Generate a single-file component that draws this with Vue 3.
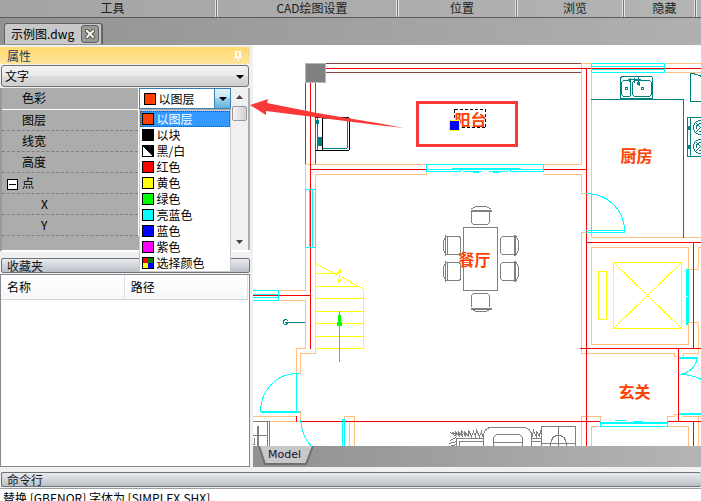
<script setup>
import { ref } from 'vue'

const menus = ['工具', 'CAD绘图设置', '位置', '浏览', '隐藏', '']
const colours = [
  { name: '以图层', swatch: 'layer' },
  { name: '以块', swatch: 'block' },
  { name: '黑/白', swatch: 'mono' },
  { name: '红色', swatch: 'red' },
  { name: '黄色', swatch: 'yellow' },
  { name: '绿色', swatch: 'green' },
  { name: '亮蓝色', swatch: 'cyan' },
  { name: '蓝色', swatch: 'blue' },
  { name: '紫色', swatch: 'magenta' },
  { name: '选择颜色', swatch: 'pick' }
]
const kind = ref('文字')
const colour = ref('以图层')
const stairs = [286, 298, 311, 323, 336, 348]
</script>

<template>
  <div class="app">
    <nav class="ribbon">
      <div v-for="(m, i) in menus" :key="i" class="group">{{ m }}</div>
    </nav>

    <div class="tabs">
      <div class="tab">
        <span>示例图.dwg</span>
        <button class="close" aria-label="关闭">
          <svg width="10" height="10" viewBox="0 0 10 10"><path d="M2 2L8 8M8 2L2 8" stroke="#555040" stroke-width="4" stroke-linecap="square" /><path d="M2 2L8 8M8 2L2 8" stroke="#fffdf0" stroke-width="2" stroke-linecap="square" /></svg>
        </button>
      </div>
    </div>

    <main class="main">
      <aside class="side">
        <header class="title">
          <span>属性</span>
          <svg width="8" height="10" viewBox="0 0 8 10" shape-rendering="crispEdges"><path d="M1 0H7V6H8V7H5V10H4V7H0V6H1ZM3 1V6H5V1Z" fill="#fff" fill-rule="evenodd" /></svg>
        </header>

        <div class="kind">
          <select v-model="kind" aria-label="对象类型"><option>文字</option></select>
          <svg class="caret" width="8" height="4" viewBox="0 0 8 4"><path d="M0 0H8L4 4Z" /></svg>
        </div>

        <div class="props">
          <table class="grid">
            <tbody>
              <tr class="active">
                <th scope="row"><label for="colour">色彩</label></th>
                <td>
                  <div class="combo">
                    <i class="swatch layer"></i>
                    <select id="colour" v-model="colour">
                      <option v-for="c in colours" :key="c.name">{{ c.name }}</option>
                    </select>
                    <span class="drop"><svg width="8" height="4" viewBox="0 0 8 4"><path d="M0 0H8L4 4Z" /></svg></span>
                    <ul class="list" role="listbox" aria-label="色彩">
                      <li v-for="c in colours" :key="c.name" role="option" :aria-selected="c.name === colour" :class="{ on: c.name === colour }" @click="colour = c.name">
                        <i class="swatch" :class="c.swatch"></i>{{ c.name }}
                      </li>
                    </ul>
                  </div>
                </td>
              </tr>
              <tr><th scope="row">图层</th><td></td></tr>
              <tr><th scope="row">线宽</th><td></td></tr>
              <tr><th scope="row">高度</th><td></td></tr>
              <tr><th scope="row" class="branch"><button class="fold" aria-label="折叠"></button>点</th><td></td></tr>
              <tr><th scope="row" class="leaf">X</th><td></td></tr>
              <tr><th scope="row" class="leaf">Y</th><td></td></tr>
            </tbody>
          </table>
          <div class="scroll">
            <svg width="7" height="4" viewBox="0 0 7 4"><path d="M0 4H7L3.500 0Z" fill="#444" /></svg>
            <span class="thumb"></span>
            <svg class="down" width="7" height="4" viewBox="0 0 7 4"><path d="M0 0H7L3.500 4Z" fill="#444" /></svg>
          </div>
        </div>

        <header class="bar fav">收藏夹</header>
        <div class="files">
          <table>
            <thead><tr><th scope="col">名称</th><th scope="col">路径</th></tr></thead>
          </table>
        </div>
      </aside>

      <section class="view">
        <div class="canvas">
          <svg class="plan" viewBox="253 45 448 401" preserveAspectRatio="xMinYMin slice">
            <g transform="translate(.5 .5)" fill="none" stroke-linecap="square" shape-rendering="crispEdges">
              <g stroke="#804840">
                <path d="M326 63H581M326 72H581M305 83V164M315 83V164" />
              </g>
              <g stroke="#ffc080">
                <path d="M305 189V164H426V174H315V189M543 164H581V63H591M543 174H581V193H591M591 72V193M665 63H701M665 72H701" />
                <path d="M305 247V290H278M278 300H305V348H296V373M315 247V263M315 348V353H300V373M300 421V411H298M253 416H296M270 421H301M344 419V416H354V446M349 421V446" />
                <path d="M586 232H581V353H674V356H678M591 232V237H701M688 269V247H591V344H688V322H698V353H683V356M688 269H698V247H701" />
                <path d="M581 446V416H600V421M600 426H591V446M667 421V416H674V414H683V416H701M667 426H688V446M698 416V446" />
              </g>
              <g stroke="#ff0000">
                <path d="M326 68H701M310 83V348M310 169H426M543 169H586M586 68V446M278 295H310M253 295H278" />
                <path d="M586 242H701M693 242V348M580 348H701M678 348V421M301 421H600M667 421H701M693 421V446M296 416V421" />
              </g>
              <g stroke="#00ffff">
                <path d="M591 63H664V72H591ZM591 66H664M591 69H664M591 193V232" />
                <path d="M426 171V164H543V171M426 169H460M426 171H460V169M510 169H543M543 171H510V169M463 171H480M489 171H507M473 172H478M493 172H498" />
                <path d="M452 168H518" stroke-width="2" />
                <path d="M305 189H315V247H305ZM309 189V247M312 189V247M253 290H278V300H253M253 294H278M253 297H278" />
                <path d="M586 193A38 37 0 0 1 624 230M586 230H624V232H586" />
                <path d="M688 269V322" />
                <path d="M686 269V294M686 297V323" stroke-width="2" />
                <path d="M260 411A36 38 0 0 1 296 373H299M296 373V411M300 420Q302 437 311 446M342 446V419H344V446" />
                <path d="M261 411H298M679 357H696M679 413H701M601 422H666" stroke-width="2" />
                <path d="M600 421V426H667V421M615 420H625M633 421H642M647 423H655M696 357V361Q691 373 679 374Q692 374 701 379" />
              </g>
              <g stroke="#008080">
                <path d="M591 99H683V237" />
                <path d="M622 76H651L652 77V98H620V77ZM623 80H629L630 82V95L629 96H623L621 94V82ZM634 80H649L651 82V94L649 96H634L632 94V82ZM628 79H640M630 78V81M634 78V82M638 77V84L639 85" />
                <circle cx="626" cy="88" r="1" /><circle cx="642" cy="88" r="1" /><circle cx="638" cy="83" r="1" />
                <path d="M701 101H690V73Q696 73 701 76M701 117H687V156H701M690 117V156M688 126V129M688 145V148M689 126V129M689 145V148" />
                <circle cx="700" cy="127" r="7" /><circle cx="700" cy="127" r="4" /><circle cx="700" cy="146" r="7" /><circle cx="700" cy="146" r="4" />
                <path d="M695 122L701 128M695 132L701 126M695 141L701 147M695 151L701 145" />
                <path d="M347 118V147L346 148H322V118H347M315 118V150M317 118V150" />
                <path d="M318 137H321V145H318ZM316 120H318V123H316Z" fill="#008080" />
                <path d="M287 320L286 319H284L283 321V323L284 324H286L287 322H304M285 322H287" />
              </g>
              <path d="M315 117H348L349 118V149L348 150H315M322 117V150" stroke="#000" />
              <g stroke="#ffff00">
                <path d="M315 263L336 274L340 269L338 282L342 277L363 289V348M315 263V348M315 273H338" />
                <path v-for="y in stairs" :key="y" :d="`M315 ${y}H${y === 286 ? 358 : 363}`" />
                <path d="M598 271H606V319H598ZM613 262H681V328H613ZM613 262L681 328M681 262L613 328" />
              </g>
              <g stroke="#00ff00" fill="#00ff00">
                <path d="M339 311V361M338 315H340V322H341V325H337V322H338Z" />
              </g>
              <g stroke="#808080">
                <rect x="463" y="227" width="34" height="63" rx="1" />
                <path d="M471 211V222L473 224H487L489 222V211M471 208L476 206H485L490 208" />
                <path d="M471 306V295L473 293H487L489 295V306M471 309L476 311H485L490 309" />
                <path d="M471 210H490M471 308H490" stroke-width="2" />
                <path v-for="y in [236, 262]" :key="y" :d="`M446 ${y}H459L460 ${y + 2}V${y + 16}L459 ${y + 18}H446M447 ${y}V${y + 18}M445 ${y - 1}V${y + 19}M445 ${y}L443 ${y + 5}V${y + 13}L445 ${y + 18}`" />
                <path v-for="y in [236, 262]" :key="'r' + y" :d="`M515 ${y}H502L500 ${y + 2}V${y + 16}L502 ${y + 18}H515M514 ${y - 1}V${y + 19}M515 ${y - 1}V${y + 19}M516 ${y}L518 ${y + 5}V${y + 13}L516 ${y + 18}`" />
                <path d="M253 421H269V446M267 421V446M253 435H267M253 444H254V438M257 426V446M258 426V446" />
                <path d="M456 446V438H483M459 446V441H483M449 446L456 444M449 443L456 441M450 440L455 437M450 432L456 436M452 432L456 434L455 431L459 436L458 431L462 436L461 430L465 436L464 431L468 436L468 430L471 436L473 431L475 436L476 430L479 436L481 431L482 436" />
                <path d="M483 446V435Q484 427 491 427H523Q531 428 531 435V446M493 446V437L496 434H519L522 437V446M493 442H522" />
                <path d="M531 438H541M531 441H541M532 436L533 430L536 437L536 431L539 436L540 430L541 437" />
                <path d="M541 446V426H575V446M541 443H575M558 426V446M550 446Q550 435 558 435Q566 435 566 446" />
              </g>
              <rect x="305" y="63" width="20" height="19" fill="#808080" stroke="#b8b8b8" />
              <g class="rooms">
                <text x="454" y="125">阳台</text>
                <text x="620" y="161">厨房</text>
                <text x="458" y="265">餐厅</text>
                <text x="618" y="397">玄关</text>
              </g>
              <rect x="454" y="109" width="31" height="18" stroke="#000" stroke-dasharray="3 2" stroke-linecap="butt" />
              <rect x="449" y="120" width="10" height="10" fill="#0000ff" stroke="#ffff00" />
              <rect x="417" y="102" width="99" height="43" stroke="#fb3838" stroke-width="3" />
            </g>
            <path d="M250 105L268 99L267 103L317 113L383 124L404 128L377 125L266 111V115Z" fill="#fb3838" />
          </svg>
        </div>
        <div class="sheets">
          <button class="sheet">
            <svg width="56" height="19" viewBox="0 0 56 19"><path d="M1 0L7 18H48L55 0" fill="#c8c8c8" stroke="#707070" stroke-width="2" /></svg>
            <span>Model</span>
          </button>
        </div>
      </section>
    </main>

    <footer class="command">
      <header class="bar">命令行</header>
      <p class="log">替换 [GBENOR] 字体为 [SIMPLEX.SHX]</p>
    </footer>
  </div>
</template>

<style>
body { overflow: hidden; }
</style>

<style scoped>
* { box-sizing: border-box; }
.app {
  display: flex;
  flex-direction: column;
  height: 100vh;
  overflow: hidden;
  background: #f0f0f0;
  color: #000;
  font: 12px/16px "Noto Sans CJK SC", "Noto Sans", sans-serif;
}
.ribbon {
  display: grid;
  grid-template-columns: 218fr 181fr 119fr 107fr 72fr 4fr;
  flex: none;
  height: 18px;
  background: linear-gradient(90deg, #a4a4a4, #b4b4b4);
  border-bottom: 1px solid #5c5c5c;
}
.group {
  min-width: 0;
  padding-left: 8px;
  text-align: center;
  color: #1c1c1c;
  border-right: 1px solid #e8e8e8;
  box-shadow: inset -1px 0 #787878, inset -2px 0 #e0e0e0;
}
.group:last-child { padding: 0; border: 0; box-shadow: none; }
.tabs {
  display: flex;
  align-items: flex-end;
  flex: none;
  height: 27px;
  padding: 0 4px 1px;
  background: linear-gradient(90deg, #929292, #b0b0b0);
}
.tab {
  display: flex;
  align-items: center;
  gap: 7px;
  height: 21px;
  padding: 0 2px 0 6px;
  background: #c8c8c8;
  border: 1px solid #646464;
  border-width: 1px 2px 0 1px;
  border-radius: 3px 3px 0 0;
}
.close {
  display: grid;
  place-items: center;
  width: 18px;
  height: 18px;
  padding: 0;
  background: #989898;
  border: 1px solid #606060;
  border-radius: 3px;
}
.main { display: flex; flex: none; height: calc(100vh - 79px); }
.side {
  display: flex;
  flex-direction: column;
  flex: none;
  width: 250px;
}
.title {
  display: flex;
  align-items: center;
  justify-content: space-between;
  height: 17px;
  margin-top: 2px;
  margin-bottom: 1px;
  padding: 0 8px 0 7px;
  line-height: 14px;
  background: linear-gradient(#ffd870, #ffe49c);
  color: #1e395b;
}
.kind { display: flex; position: relative; height: 22px; padding: 0 1px; }
.kind select {
  flex: 1;
  padding: 0 3px;
  appearance: none;
  border: 1px solid #707070;
  border-radius: 3px;
  background: linear-gradient(#f2f2f2, #ebebeb 50%, #dddddd 50%, #cfcfcf);
  color: #000;
  font: inherit;
}
.caret { position: absolute; right: 6px; top: 10px; }
.props {
  display: flex;
  height: 164px;
  margin-top: 1px;
  background: #acacac;
  border-left: 2px solid #989898;
  border-bottom: 2px solid #fff;
}
.grid {
  flex: 1;
  align-self: flex-start;
  border-collapse: collapse;
  table-layout: fixed;
}
.grid tr { height: 21px; }
.grid th {
  width: 136px;
  padding: 0 0 0 20px;
  font-weight: 400;
  text-align: left;
  border-bottom: 1px dashed #808080;
}
.grid .active th { border-bottom: 1px solid #fff; }
.grid td { padding: 0; border-left: 1px solid #fff; }
.grid .branch { padding-left: 5px; }
.grid .leaf { padding-left: 39px; }
.fold {
  width: 11px;
  height: 11px;
  margin: 0 4px 0 0;
  padding: 0;
  vertical-align: -1px;
  border: 1px solid #000;
  background: linear-gradient(#000, #000) center / 7px 1px no-repeat #fff;
}
.combo {
  display: flex;
  position: relative;
  align-items: center;
  height: 21px;
  padding-left: 4px;
  background: #fff;
  border: 1px solid #3c7fb1;
}
.combo select {
  flex: 1;
  min-width: 0;
  padding: 0 0 0 3px;
  appearance: none;
  border: 0;
  background: none;
  color: #000;
  font: inherit;
}
.drop {
  display: grid;
  place-items: center;
  align-self: stretch;
  width: 16px;
  border-left: 1px solid #3c7fb1;
  background: linear-gradient(#e0f2fb, #c4e5f6 50%, #98d1ef 50%, #68b3db);
}
.swatch { flex: none; width: 12px; height: 12px; border: 1px solid #000; }
.layer { background: #ff4000; }
.block { background: #000; }
.mono { background: linear-gradient(45deg, #fff 50%, #000 50%); }
.red { background: #ff0000; }
.yellow { background: #ffff00; }
.green { background: #00ff00; }
.cyan { background: #00ffff; }
.blue { background: #0000ff; }
.magenta { background: #ff00ff; }
.pick { background: conic-gradient(#008000 25%, #0000ff 25% 50%, #ffff00 50% 75%, #ff0000 75%); }
.list {
  position: absolute;
  z-index: 2;
  top: 21px;
  left: -1px;
  right: -1px;
  margin: 0;
  padding: 0;
  list-style: none;
  background: #fff;
  border: 1px solid #c8c8d0;
}
.list li { display: flex; align-items: center; gap: 3px; height: 16px; padding-left: 2px; white-space: nowrap; }
.list .on { background: #3399ff; color: #fff; outline: 1px dotted #804000; outline-offset: -1px; }
.scroll {
  display: flex;
  flex-direction: column;
  align-items: center;
  width: 17px;
  margin-right: 2px;
  padding: 7px 0 6px;
  background: #f0f0f0;
}
.thumb {
  width: 15px;
  height: 15px;
  margin-top: 7px;
  border: 1px solid #979797;
  border-radius: 2px;
  background: linear-gradient(90deg, #f4f4f4, #d0d0d0);
}
.down { margin-top: auto; }
.bar {
  height: 15px;
  padding-left: 5px;
  line-height: 14px;
  color: #10151c;
  background: linear-gradient(#e8ebee, #bcc0c7);
  border: 1px solid #707278;
  border-radius: 2px;
}
.fav { flex: none; margin: 6px 0 1px 1px; }
.files { flex: 1; border: 1px solid #828790; background: #fff; }
.files table { width: calc(100% - 1px); border-collapse: collapse; table-layout: fixed; }
.files th {
  height: 24px;
  padding: 0 6px;
  font-weight: 400;
  text-align: left;
  border-right: 1px solid #dcdfe4;
  border-bottom: 1px solid #d5d5d5;
  background: linear-gradient(#fff, #f6f7f9);
}
.view { display: flex; flex-direction: column; flex: 1; min-width: 0; margin-left: 3px; }
.canvas { flex: 1; min-height: 0; background: #fff; }
.plan { display: block; width: 100%; height: 100%; overflow: visible; }
.rooms { fill: #ff4000; font: 700 16px "Noto Sans CJK SC", sans-serif; }
.sheets {
  position: relative;
  flex: none;
  height: 21px;
  padding-left: 5px;
  background: linear-gradient(90deg, #909090, #b4b4b4);
}
.sheet {
  display: grid;
  padding: 0;
  border: 0;
  background: none;
  color: #10102c;
  font: 11px/17px "DejaVu Sans", sans-serif;
}
.sheet > * { grid-area: 1 / 1; }
.sheet > span { padding-right: 3px; }
.command { flex: 1; padding-top: 5px; overflow: hidden; }
.command .bar { margin-left: 1px; border-right: 0; }
.log { margin: 1px 0 0; padding: 1px 3px; height: 32px; background: #fff; border-top: 1px solid #a0a0a0; }
</style>
